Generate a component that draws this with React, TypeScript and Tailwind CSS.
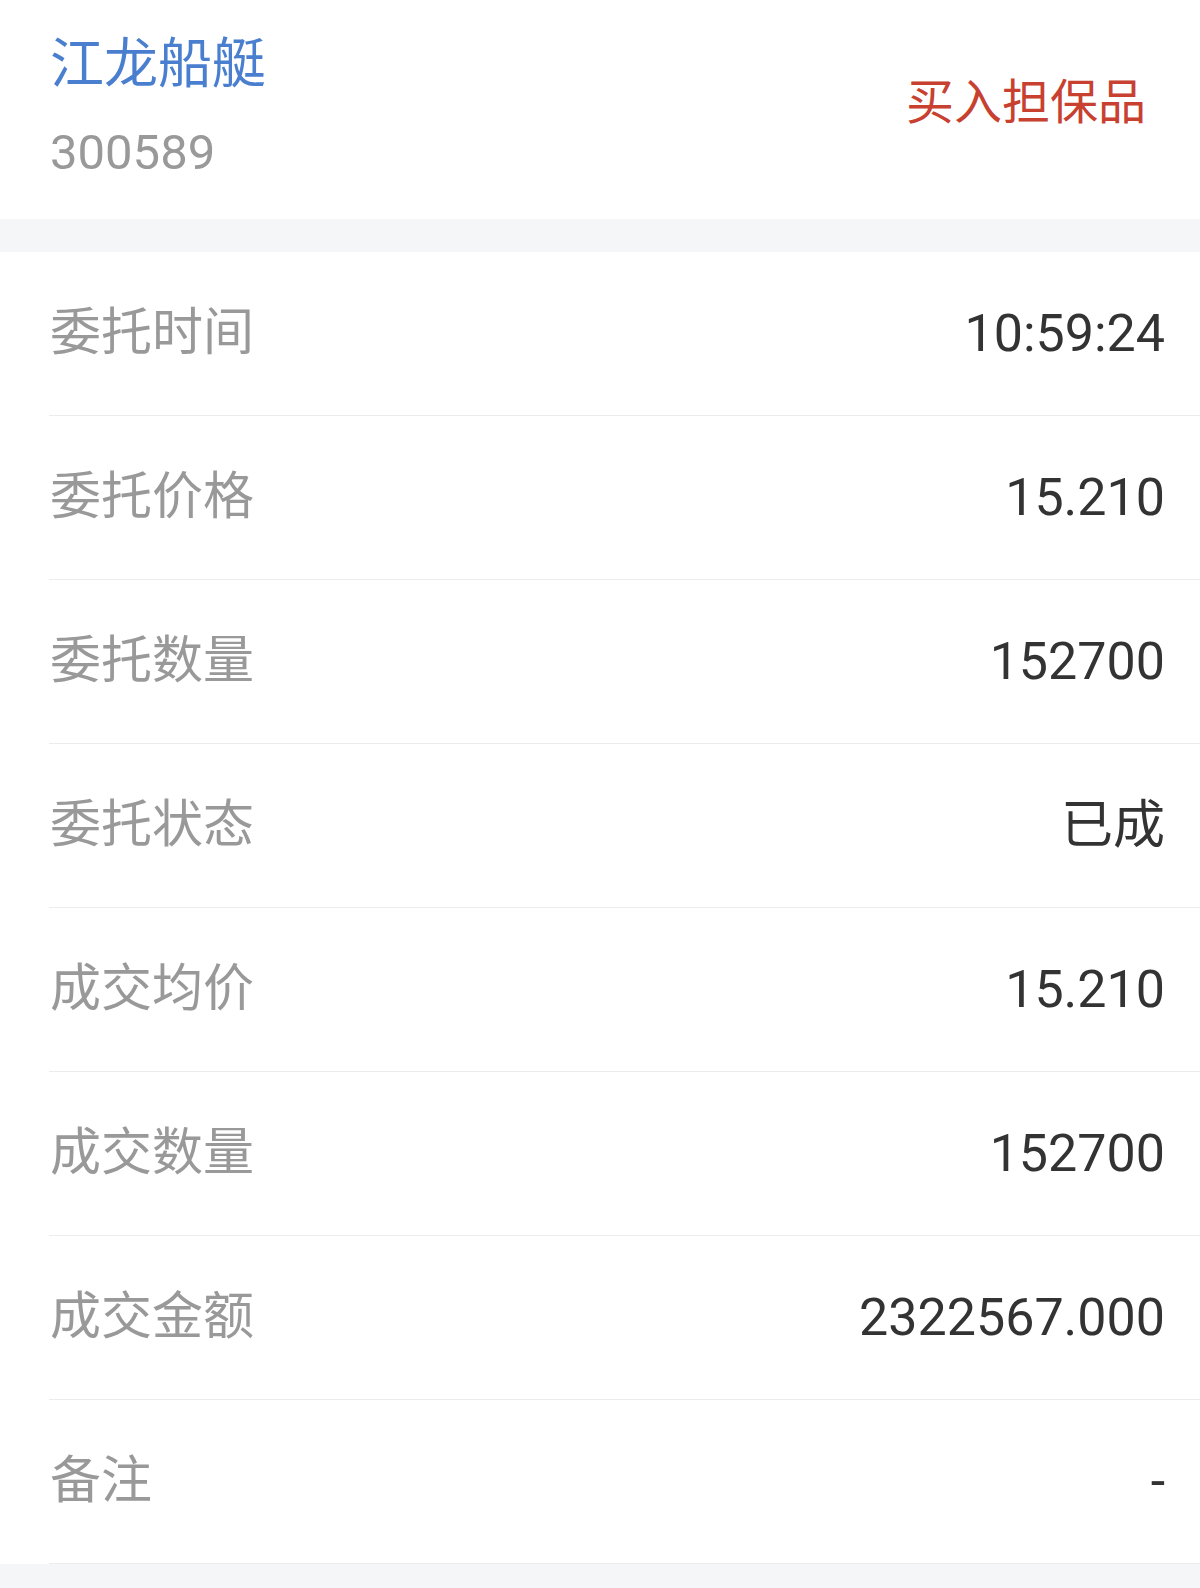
import React from "react";

const ROWS: { label: string; value: string }[] = [
  { label: "委托时间", value: "10:59:24" },
  { label: "委托价格", value: "15.210" },
  { label: "委托数量", value: "152700" },
  { label: "委托状态", value: "已成" },
  { label: "成交均价", value: "15.210" },
  { label: "成交数量", value: "152700" },
  { label: "成交金额", value: "2322567.000" },
  { label: "备注", value: "-" },
];

export default function App() {
  return (
    <div
      className="min-h-[1588px] w-[1200px] bg-[#f5f6f8]"
      style={{ fontFamily: 'Roboto, "Noto Sans CJK SC", sans-serif' }}
    >
      {/* Header */}
      <div className="h-[219px] bg-white flex items-center justify-between pl-[50px] pr-[54px]">
        <div className="flex flex-col pb-[4px]">
          <span className="text-[54px] leading-[60px] text-[#4a7fcf]">江龙船艇</span>
          <span className="text-[49px] leading-[56px] mt-[30px] text-[#999999]">300589</span>
        </div>
        <span className="text-[48px] leading-[60px] text-[#c8402f] mt-[-14px]">买入担保品</span>
      </div>

      <div className="h-[33px]" />

      {/* Detail rows */}
      <div className="bg-white">
        {ROWS.map((row) => (
          <div key={row.label} className="pl-[49px]">
            <div className="h-[164px] flex items-center justify-between border-b border-[#ececec] pr-[35px]">
              <span className="text-[51px] text-[#999999] pl-[1px]">{row.label}</span>
              <span className="text-[52px] text-[#333333]">{row.value}</span>
            </div>
          </div>
        ))}
      </div>
    </div>
  );
}
